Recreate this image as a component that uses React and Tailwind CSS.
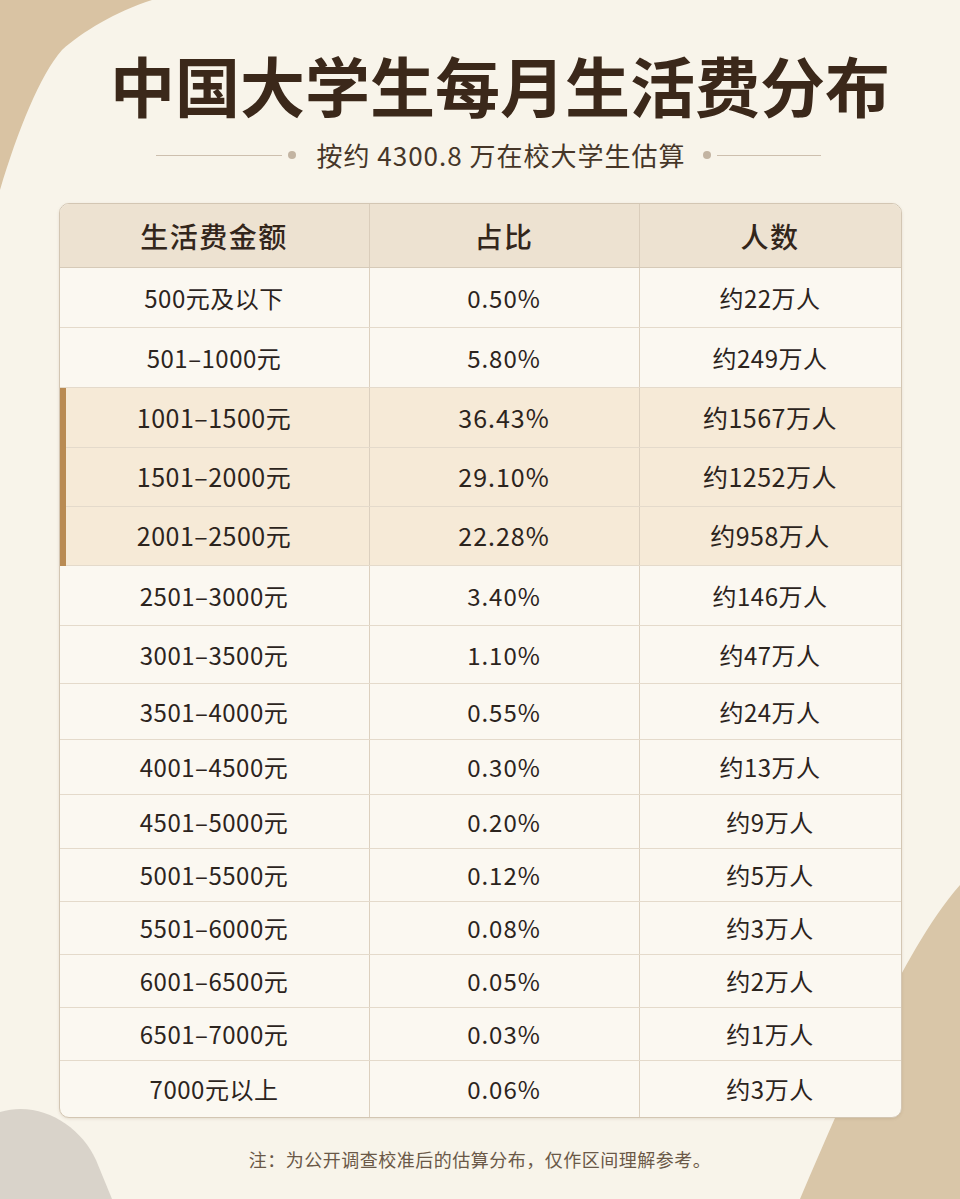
import React from "react";

const rows = [
  ["500元及以下", "0.50%", "约22万人", false, 60],
  ["501–1000元", "5.80%", "约249万人", false, 60],
  ["1001–1500元", "36.43%", "约1567万人", true, 60],
  ["1501–2000元", "29.10%", "约1252万人", true, 59],
  ["2001–2500元", "22.28%", "约958万人", true, 59],
  ["2501–3000元", "3.40%", "约146万人", false, 60],
  ["3001–3500元", "1.10%", "约47万人", false, 58],
  ["3501–4000元", "0.55%", "约24万人", false, 56],
  ["4001–4500元", "0.30%", "约13万人", false, 55],
  ["4501–5000元", "0.20%", "约9万人", false, 54],
  ["5001–5500元", "0.12%", "约5万人", false, 53],
  ["5501–6000元", "0.08%", "约3万人", false, 53],
  ["6001–6500元", "0.05%", "约2万人", false, 53],
  ["6501–7000元", "0.03%", "约1万人", false, 53],
  ["7000元以上", "0.06%", "约3万人", false, 56],
];

const font = { fontFamily: '"Noto Sans CJK SC", "Noto Sans", sans-serif' };

export default function App() {
  return (
    <div
      className="relative w-[960px] h-[1199px] overflow-hidden bg-[#f8f4ea]"
      style={font}
    >
      <svg
        className="absolute inset-0"
        width="960"
        height="1199"
        viewBox="0 0 960 1199"
      >
        <path d="M0 0 H152 C115 12 82 32 62 50 C40 75 18 130 0 190 Z" fill="#d9c3a3" />
        <path d="M960 885 C925 925 895 985 870 1035 C850 1085 825 1140 800 1199 H960 Z" fill="#d9c6a8" />
        <path d="M0 1112 C40 1100 80 1125 96 1160 L112 1199 H0 Z" fill="#d9d3ca" />
      </svg>

      <div className="relative flex flex-col items-center">
        <h1 className="mt-[41px] ml-[40px] text-[65px] leading-[86px] font-semibold text-[#3b281a]">
          中国大学生每月生活费分布
        </h1>
        <div className="mt-[12px] ml-[17px] flex items-center">
          <div className="w-[126px] h-px bg-[#cdbfae]" />
          <div className="ml-[6px] w-[8px] h-[8px] rounded-full bg-[#c3b4a2]" />
          <div className="ml-[20px] mr-[17px] text-[26px] leading-[32px] text-[#463628] tracking-[1px]">
            按约 4300.8 万在校大学生估算
          </div>
          <div className="w-[8px] h-[8px] rounded-full bg-[#c3b4a2]" />
          <div className="ml-[6px] w-[104px] h-px bg-[#cdbfae]" />
        </div>

        <div className="mt-[32px] w-[843px] rounded-[10px] border border-[#d3c6b3] bg-[#fbf8f1] overflow-hidden shadow-[0_1px_3px_rgba(120,95,60,0.15)]">
          <div className="flex h-[64px] bg-[#ede2d1] border-b border-[#d6cab8] text-[28px] font-medium text-[#33261b]">
            <div className="w-[310px] flex items-center justify-center border-r border-[#dacdbb] tracking-[1.5px]">生活费金额</div>
            <div className="w-[270px] flex items-center justify-center border-r border-[#dacdbb] tracking-[1.5px]">占比</div>
            <div className="flex-1 flex items-center justify-center tracking-[1.5px]">人数</div>
          </div>
          {rows.map(([a, b, c, hl, h], i) => (
            <div
              key={i}
              className={
                "relative flex text-[#2c241d] " +
                (i < rows.length - 1 ? "border-b border-[#e4dacb] " : "") +
                (hl ? "bg-[#f6ead7] text-[25px]" : "text-[24px]")
              }
              style={{ height: h }}
            >
              {hl && <div className="absolute left-0 top-0 bottom-[-1px] w-[6px] bg-[#b98b53]" />}
              <div className="w-[310px] flex items-center justify-center border-r border-[#dcd0bf] tracking-[0.5px]">{a}</div>
              <div className="w-[270px] flex items-center justify-center border-r border-[#dcd0bf] tracking-[1px]">{b}</div>
              <div className="flex-1 flex items-center justify-center tracking-[0.5px]">{c}</div>
            </div>
          ))}
        </div>

        <div className="mt-[29px] text-[18px] leading-[24px] text-[#6a5847] tracking-[0.5px]">
          注：为公开调查校准后的估算分布，仅作区间理解参考。
        </div>
      </div>
    </div>
  );
}
